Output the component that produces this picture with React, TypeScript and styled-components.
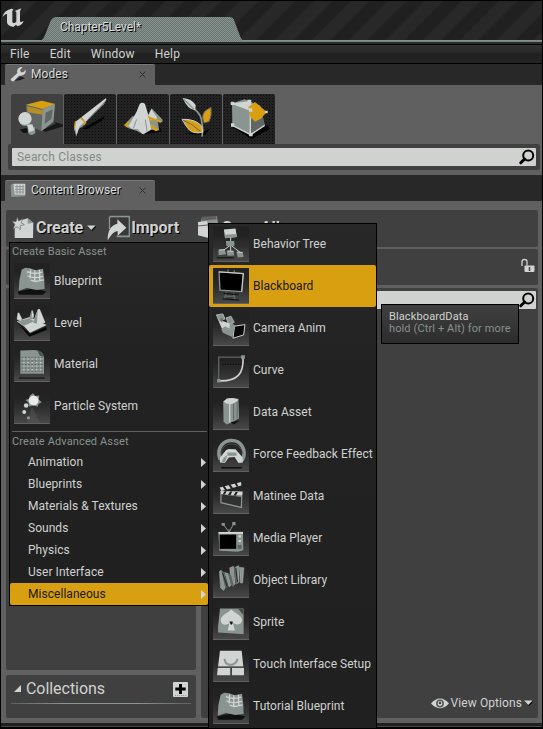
import React from 'react';
import styled, { createGlobalStyle } from 'styled-components';

const Global = createGlobalStyle`
  *{box-sizing:border-box}
  body{margin:0;background:#000;font-family:Roboto,"Liberation Sans",sans-serif;font-size:12px;color:#d0d2d0;overflow:hidden}
  svg{display:block;flex:none}
`;

const W = '#d0d4d2';
const G = '#8a9490';
const D = '#606664';
const A = '#d8a010';

const Window = styled.div`
  position:relative;width:543px;height:729px;background:#606060;
  border:1px solid #000;display:flex;flex-direction:column;overflow:hidden;
`;
const TitleBar = styled.div`
  height:43px;flex:none;display:flex;align-items:flex-start;position:relative;
  background:linear-gradient(#8a9490,#747e7a) 0 39px/100% 2px no-repeat,
    linear-gradient(#282e2c,#282e2c) 0 41px/100% 2px no-repeat,
    repeating-linear-gradient(135deg,#202020 0 11px,#282828 13px 24px,#202020 26.16px);
`;
const Logo = styled.svg`margin:6px 0 0 1px;`;
const LevelTab = styled.div`
  width:208px;height:26px;margin:15px 0 0 11px;padding-left:23px;line-height:22px;color:#d8dcda;
  background:repeating-conic-gradient(#87918d 0 25%,#6a7672 0 50%) 0 0/2px 2px;
  clip-path:path("M0 26 Q6 25 8 19 L14 4 Q16 1 19 1 L192 1 Q196 1 197 4 L203 20 Q205 25 208 26Z");
  text-shadow:1px 1px 0 #000;letter-spacing:-.05px;
`;
const MenuBar = styled.div`
  height:20px;flex:none;border:1px solid #000;border-width:1px 0;display:flex;gap:20px;padding-left:9px;
  align-items:center;background:linear-gradient(#303030,#282828 40%,#202020 50%,#242424);letter-spacing:.2px;
`;
const TabStrip = styled.div<{ $h: number }>`
  height:${p => p.$h}px;flex:none;background:#282828;display:flex;align-items:flex-end;padding-left:4px;
`;
const PanelTab = styled.div`
  width:150px;height:21px;background:#606060;border-top:1px solid #747a78;border-radius:2px 2px 0 0;
  display:flex;align-items:center;padding:0 9px 2px 5px;text-shadow:1px 1px 0 #000;color:#d8dcda;
`;
const TabLabel = styled.span`flex:1;padding-left:5px;white-space:nowrap;letter-spacing:.05px;`;
const ModesPanel = styled.div`height:90px;flex:none;padding:9px 2px 0 7px;background:#606060;`;
const ModeRow = styled.div`display:flex;gap:1px;padding-left:3px;`;
const ModeButton = styled.div<{ $on?: boolean }>`
  width:52px;height:50px;border-radius:2px 2px 0 0;
  background:${p => p.$on ? '#404040' : 'radial-gradient(#0c0c0c 25%,transparent 30%) 0 0/3px 3px,#222'};
`;
const SearchFrame = styled.div`background:#404040;border-radius:2px;padding:4px;height:26px;`;
const SearchField = styled.div`
  background:#d0d2d0;height:18px;border-radius:1px;display:flex;align-items:center;justify-content:space-between;
  padding:0 1px 0 5px;color:#7f8a86;letter-spacing:.2px;
`;
const Browser = styled.div`height:522px;flex:none;background:#606060;padding:9px 4px 5px 5px;display:flex;flex-direction:column;`;
const Toolbar = styled.div`
  height:37px;flex:none;background:#404040;border-radius:2px;display:flex;align-items:center;padding:0 0 2px 6px;
  font-weight:700;font-size:16px;text-shadow:1px 1px 0 #000;white-space:nowrap;
`;
const ToolLabel = styled.span<{ $l?: number; $r?: number }>`margin:0 ${p => p.$r || 0}px 0 ${p => p.$l || 0}px;letter-spacing:-.05px;`;
const PathBar = styled.div`
  height:36px;flex:none;margin:2px 0 3px;background:#404040;border-radius:2px;display:flex;align-items:center;
  justify-content:flex-end;padding:0 3px 2px 0;
`;
const Columns = styled.div`flex:1;display:flex;gap:5px;min-height:0;`;
const LeftColumn = styled.div`width:190px;display:flex;flex-direction:column;gap:5px;`;
const Sources = styled.div`flex:1;background:#404040;border-radius:2px;`;
const Collections = styled.div`
  height:43px;background:#404040;border-radius:2px;padding:0 5px;font-size:16px;
`;
const CollectionHead = styled.div`
  display:flex;align-items:center;height:29px;padding:0 3px;border-bottom:1px solid;
  border-image:linear-gradient(90deg,#606060,#8a9490 30%,#8a9490 70%,#606060) 1;
`;
const CollectionTitle = styled.span`flex:1;padding:0 0 1px 5px;letter-spacing:-.05px;`;
const AssetView = styled.div`
  flex:1;background:#404040;border-radius:2px;display:flex;flex-direction:column;justify-content:space-between;
  padding:3px 2px 6px 4px;
`;
const ViewOptions = styled.div`display:flex;align-items:center;justify-content:flex-end;gap:2px;padding-right:3px;height:18px;letter-spacing:.08px;`;
const StatusEdge = styled.div`height:5px;flex:none;background:linear-gradient(#202020 0 3px,#484848 3px 4px,#000 4px);`;

const CreateMenu = styled.div`
  position:absolute;left:8px;top:241px;width:200px;height:364px;border:1px solid #000;
  background:linear-gradient(#282828,#222 30%,#202020);display:flex;flex-direction:column;
`;
const MiscMenu = styled.div`
  position:absolute;left:207px;top:222px;width:169px;height:506px;border:1px solid #000;
  background:linear-gradient(#282828,#222 30%,#202020);
`;
const MiscList = styled.div`margin-top:-1px;`;
const MenuHeader = styled.div<{ $h: number }>`
  height:${p => p.$h}px;line-height:18px;padding-left:2px;font-size:11px;color:#87918d;letter-spacing:.13px;
`;
const AssetRow = styled.div<{ $on?: boolean }>`
  height:42px;display:flex;align-items:center;gap:4px;padding-left:4px;white-space:nowrap;letter-spacing:.03px;
  border-radius:2px;background:${p => p.$on ? A : 'transparent'};color:${p => p.$on ? '#181818' : '#d0d2d0'};
`;
const Thumb = styled.svg`background:linear-gradient(#222 25%,#303030 60%,#484848);border-bottom:1px solid #606060;`;
const Rule = styled.div`height:1px;background:#606060;margin:4px 1px 1px 2px;`;
const SubRow = styled.div<{ $on?: boolean }>`
  height:22px;flex:none;display:flex;align-items:center;justify-content:space-between;padding:0 2px 0 18px;
  border-radius:2px;letter-spacing:.04px;background:${p => p.$on ? A : 'transparent'};color:${p => p.$on ? '#181818' : '#d0d2d0'};
`;
const Tooltip = styled.div`
  position:absolute;left:380px;top:303px;width:138px;height:40px;border:1px solid #000;padding:6px 7px;
  font-size:11px;line-height:12px;letter-spacing:.12px;white-space:nowrap;
  background:linear-gradient(#404040,#2c2c2c);
`;
const Hint = styled.div`color:#87918d;`;

const Magnifier = () => (
  <svg width="16" height="16" viewBox="0 0 16 16" fill="none" stroke="#000"><circle cx="9.2" cy="6.5" r="5" strokeWidth="2" /><path d="M5.7 10 1.8 13.8" strokeWidth="3" strokeLinecap="round" /></svg>
);
const Close = () => (
  <svg width="7" height="7" viewBox="0 0 7 7" stroke="#303030"><path d="M.5.5 6.5 6.5M6.5.5.5 6.5" /></svg>
);
const Down = () => (
  <svg width="9" height="6" viewBox="0 0 9 6"><path d="M.5 1.5h9L5 6z" fill="#000" /><path d="M0 .5h8.5L4.3 5z" fill={W} /></svg>
);
const Right = () => (
  <svg width="5" height="9" viewBox="0 0 5 9"><path d="M0 0 5 4.5 0 9z" fill={W} /></svg>
);

const sheet = (
  <>
    <path d="M10 88 62 78 98 88 88 98 14 98Z" fill="#101010" />
    <path d="M22 21 33 15 48 16 65 22 88 18 92 50 93 80 67 83 38 77 13 86 15 53Z" fill={G} />
    <path d="M38 27 62 33 86 28M40 40 62 46 88 41M50 20 48 48M63 22 62 58M77 21 78 56M50 53 64 57 90 52" stroke={W} strokeWidth="4" fill="none" />
  </>
);

const art: Record<string, React.ReactNode> = {
  Blueprint: sheet,
  'Tutorial Blueprint': sheet,
  Level: (
    <>
      <path d="M12 56 35 86 46 98 100 76 98 67 48 89Z" fill="#080808" />
      <path d="M7 50 47 37 99 62 48 86 31 67Z" fill={W} /><path d="M10 50 45 41 60 50 29 64Z" fill={G} />
      <path d="M57 54 72 13 78 12 95 54 78 62Z" fill={W} /><path d="M72 15 69 58 57 54Z" fill={G} />
      <path d="M10 24 14 24 24 44 15 48 7 44Z" fill={W} /><path d="M52 17 58 17 58 43 45 43Z" fill={G} /><path d="M55 17 60 30 58 40 53 38Z" fill={W} />
    </>
  ),
  Material: (
    <>
      <path d="M18 14 62 12Q90 14 91 35L91 86 18 86Z" fill={G} />
      <path d="M70 13Q88 17 91 33L78 30Z" fill="#4e5452" />
      <path d="M22 35H88M22 46H88M22 57H88M22 68H88M22 78H88" stroke="#59605d" strokeWidth="3" strokeDasharray="5 5" />
      <path d="M27 40H88M27 51H88M27 62H88M27 73H88" stroke={W} strokeWidth="3" strokeDasharray="4 9" /><path d="M14 99H93" stroke="#181818" strokeWidth="4" />
    </>
  ),
  'Particle System': (
    <>
      <path d="M53 56 80 108H40Z" fill="#606060" opacity=".4" />
      <path d="M57 16 64 25 76 23 75 36 84 44 74 49 71 58 58 53 45 57 43 45 34 37 45 33 47 24Z" fill={G} />
      <circle cx="59" cy="39" r="15" fill="#e8eae8" /><circle cx="36" cy="54" r="7" fill={W} /><circle cx="30" cy="74" r="6" fill={W} /><circle cx="43" cy="92" r="5" fill={G} />
    </>
  ),
  'Behavior Tree': (
    <>
      <path d="M53 34V82M53 59 25 79M53 59 84 83" stroke={W} strokeWidth="3" fill="none" />
      <path d="M32 11 68 8 72 34 36 38Z" fill={W} /><path d="M33 27 72 25 72 34 36 38Z" fill={G} />
      <path d="M38 46 64 46 65 61 40 62ZM15 74 35 73 39 87 16 90ZM41 77 62 78 64 91 43 92ZM71 80 90 82 93 96 75 97Z" fill={G} />
      <path d="M17 74 35 73M43 77 62 78M73 80 90 82" stroke={W} strokeWidth="3" /><path d="M10 98 62 98" stroke="#181818" strokeWidth="4" />
    </>
  ),
  Blackboard: (
    <>
      <path d="M45 5V16M64 7V17M40 74 34 95M62 76 66 98M34 87H65" stroke={D} strokeWidth="5" fill="none" />
      <path d="M17 12 92 17 87 73 20 68Z" fill="#000" stroke={G} strokeWidth="4" /><path d="M17 12 92 17 87 73" fill="none" stroke={W} strokeWidth="3" />
      <path d="M31 78 77 82M28 95 78 99" stroke="#141414" strokeWidth="4" />
    </>
  ),
  'Camera Anim': (
    <>
      <path d="M9 15 29 12 36 28 16 33ZM39 24 54 19 64 38 47 48Z" fill={G} stroke={W} strokeWidth="2" />
      <path d="M16 35 28 34 68 48 60 71 26 58Z" fill={W} /><path d="M24 59 36 50 61 64 58 83 29 70Z" fill={G} />
      <path d="M65 50 97 45 93 77 60 87Z" fill="#080808" stroke={W} strokeWidth="3" /><path d="M51 40 67 48 58 83 47 74Z" fill={G} /><path d="M20 25 30 28 26 39Z" fill={D} />
    </>
  ),
  Curve: (
    <>
      <path d="M16 89V16H91" fill="none" stroke={D} strokeWidth="4" /><path d="M91 16C94 66 74 91 17 89" fill="none" stroke={W} strokeWidth="5" />
      <path d="M28 38H88" stroke="#000" strokeWidth="3" strokeDasharray="3 5" /><path d="M85 10H97V21H85ZM11 83H22V94H11Z" fill={G} />
    </>
  ),
  'Data Asset': (
    <>
      <path d="M30 22 50 12 77 15 79 75 55 89 40 94 31 85Z" fill={G} />
      <path d="M31 23 41 14 60 12 77 17 71 24 56 32 39 29Z" fill={W} /><path d="M50 31V87" stroke={W} strokeWidth="4" /><path d="M62 29V79M73 24V74" stroke={D} strokeWidth="3" />
      <path d="M53 87 80 82 63 94Z" fill="#101010" />
    </>
  ),
  'Force Feedback Effect': (
    <>
      <path d="M20 72C7 32 34 14 56 14C86 14 104 45 89 75" fill="none" stroke={G} strokeWidth="11" />
      <path d="M24 57C23 15 85 14 90 54" fill="none" stroke={D} strokeWidth="2" />
      <path d="M22 64 39 43 47 40 68 41 90 66 91 82 77 83 65 65 47 66 35 83 20 82 19 72Z" fill={W} />
      <path d="M43 51H71V61H43Z" fill={G} /><path d="M32 66 43 59 35 82 24 82Z" fill={G} /><path d="M24 98H87" stroke="#101010" strokeWidth="5" />
    </>
  ),
  'Matinee Data': (
    <>
      <path d="M23 48 87 57 86 91 23 76Z" fill="#303030" stroke={G} strokeWidth="4" />
      <path d="M21 40 90 42 89 55 23 49Z" fill={W} /><path d="M19 29 85 12 86 23 24 40Z" fill={W} />
      <path d="M28 26 36 38 42 36 34 24M46 21 54 33 60 31 52 19M65 16 72 28 77 26 71 14M34 41 28 51 35 51 41 41M51 42 45 52 52 53 58 42M68 43 62 54 69 55 75 43" fill="#202020" />
    </>
  ),
  'Media Player': (
    <>
      <path d="M31 14 48 38 63 10M48 37V28" fill="none" stroke={G} strokeWidth="3" /><path d="M25 9H35V18H25ZM58 6H68V16H58Z" fill={G} />
      <path d="M15 37 91 36 92 93 75 98 18 95Z" fill={G} /><path d="M16 37H91V43H16Z" fill={W} /><path d="M19 45H70V89H19Z" fill="#000" /><path d="M77 47H85V54H77ZM77 62H85V68H77Z" fill={W} /><path d="M74 77H87V89H74Z" fill={D} />
    </>
  ),
  'Object Library': (
    <>
      <path d="M18 29 24 25 36 80 31 88 22 80ZM34 32 46 36 54 72 48 77ZM50 18 62 13 67 68 59 74 53 56ZM67 16 78 11 79 62 72 68ZM80 16 94 18 90 65 83 65Z" fill={G} stroke={W} strokeWidth="1" />
      <path d="M26 28 33 31 44 76 37 82ZM44 34 54 40 64 78 55 72ZM63 16 67 18 75 67 68 68Z" fill={D} /><path d="M28 34 42 76M69 18 74 62" stroke="#202020" strokeWidth="3" />
    </>
  ),
  Sprite: (
    <>
      <path d="M20 14H93V93L14 88V70Z" fill={G} /><path d="M76 15H92V34Z" fill="#404846" />
      <path d="M54 16C46 28 22 34 22 50C23 67 41 67 49 59L44 82H66L60 59C69 66 87 66 88 50C88 33 64 28 54 16Z" fill={W} /><path d="M49 54H59V60L54 65Z" fill="#181818" />
    </>
  ),
  'Touch Interface Setup': (
    <>
      <path d="M20 15H87L92 63H14ZM13 68H51V90H11ZM57 68H94V90H57Z" fill={W} /><path d="M34 40Q36 57 50 58H57Q73 52 74 39" fill="none" stroke={G} strokeWidth="6" /><path d="M41 43Q53 58 67 43V34H41Z" fill={W} /><path d="M14 65H93M53 67V91" stroke={D} strokeWidth="3" />
    </>
  ),
};

const Asset = ({ name, on }: { name: string; on?: boolean }) => (
  <AssetRow $on={on}><Thumb width="36" height="36" viewBox="0 0 108 108">{art[name]}</Thumb>{name}</AssetRow>
);

const modes = [
  <>
    <path d="M65 101 95 108 136 88 124 82 165 94 104 113Z" fill="#181818" />
    <path d="M45 32 92 20 132 30 127 83 91 112 48 92Z" fill={D} /><path d="M45 32 92 20 132 30 95 45Z" fill={A} /><path d="M95 45 132 30 127 83 91 112Z" fill={G} /><path d="M104 56 125 46 121 74 101 90Z" fill={D} />
    <path d="M48 37 95 48 94 62 50 55Z" fill={A} opacity=".7" />
    <path d="M26 107 60 99 58 115 38 117Z" fill="#101010" /><circle cx="42" cy="74" r="20" fill={W} /><path d="M26 86Q40 99 56 86L54 92Q42 100 32 93ZM49 100 72 99 73 117Q60 129 51 116Z" fill={G} /><path d="M48 92 64 91 70 109 55 115Z" fill={W} />
  </>,
  <>
    <path d="M55 104 122 66 118 78 69 106Z" fill="#060606" /><path d="M52 70 126 12 127 18 64 85Z" fill={W} /><path d="M64 85 127 18 120 31 68 82Z" fill={G} />
    <path d="M51 70 66 86 57 97 44 105 37 128 30 105 32 85Z" fill={G} /><path d="M34 84 51 73 61 84 46 99 38 122 33 102Z" fill={W} /><path d="M49 72 65 86 59 92M35 82 32 101" stroke={A} strokeWidth="4" fill="none" />
  </>,
  <>
    <path d="M31 103 80 107 126 97 135 113 87 120Z" fill="#080808" /><path d="M21 94 47 66 86 75 104 43 137 77 136 85 122 82 127 109 103 107 80 121 61 112 34 103Z" fill={G} />
    <path d="M34 96 58 55 68 30Q76 22 84 30L93 60 103 106 77 121 62 106 44 104Z" fill={W} /><path d="M103 45 121 73 111 79 94 67Z" fill={W} /><path d="M22 93 38 79 31 101ZM93 66 135 82 130 87 108 77 98 83ZM103 91 126 108 116 112 101 101Z" fill={A} /><path d="M59 76 49 103M85 77 90 112" stroke={G} strokeWidth="3" />
  </>,
  <>
    <path d="M43 119 96 115 120 104 105 123Z" fill="#050505" /><path d="M73 45Q94 60 96 88Q101 108 96 128" fill="none" stroke={G} strokeWidth="5" />
    <path d="M38 12Q65 14 77 33L76 49Q53 47 38 12Z" fill={W} /><path d="M42 16 72 46" stroke={G} strokeWidth="4" /><path d="M123 40Q126 65 118 82L103 87Q92 68 105 51Z" fill={A} stroke={D} strokeWidth="3" /><path d="M36 76Q75 74 95 96L98 115Q65 123 49 97Z" fill={A} stroke={W} strokeWidth="3" /><path d="M38 78Q68 89 91 112" stroke={D} strokeWidth="3" fill="none" />
  </>,
  <>
    <path d="M28 99 85 135 139 106 135 94Z" fill="#050505" /><path d="M27 28 65 16 112 35 125 94 82 123 28 94Z" fill={G} />
    <path d="M27 28 77 22 95 37 82 48Z" fill={W} /><path d="M82 48 112 35 125 94 82 123Z" fill={D} /><path d="M27 28 82 48V121M28 94 83 122 125 94" fill="none" stroke={W} strokeWidth="4" />
    <path d="M76 39 96 24 131 54 115 73 96 83 82 69Z" fill={A} /><path d="M23 23H34V33H23ZM73 17H85V27H73ZM78 43H88V53H78ZM126 50H134V58H126ZM24 88H34V98H24ZM78 116H89V127H78Z" fill={W} />
  </>,
];

const misc = ['Behavior Tree', 'Blackboard', 'Camera Anim', 'Curve', 'Data Asset', 'Force Feedback Effect', 'Matinee Data', 'Media Player', 'Object Library', 'Sprite', 'Touch Interface Setup', 'Tutorial Blueprint'];

export default function App() {
  return (
    <Window>
      <Global />
      <TitleBar>
        <Logo width="24" height="22" viewBox="0 0 72 66"><path d="M1 31Q5 10 28 5L34 7 31 13V44Q32 50 39 47L43 44V15L38 12 58 4 54 13V43Q56 48 65 41Q62 54 46 58L42 53 34 60Q16 57 15 46V20Q8 20 1 31Z" fill={W} /></Logo>
        <LevelTab>Chapter5Level*</LevelTab>
      </TitleBar>
      <MenuBar><span>File</span><span>Edit</span><span>Window</span><span>Help</span></MenuBar>
      <TabStrip $h={21}>
        <PanelTab>
          <svg width="16" height="16" viewBox="0 0 48 48"><path d="M14 44 32 31 45 37 30 43Z" fill="#202020" /><path d="M2 40 22 21Q19 7 32 3L38 4 30 12 33 19 40 19 47 11Q49 27 33 29L27 29 11 46Q3 47 2 40Z" fill={W} /></svg>
          <TabLabel>Modes</TabLabel><Close />
        </PanelTab>
      </TabStrip>
      <ModesPanel>
        <ModeRow>
          {modes.map((m, i) => <ModeButton key={i} $on={i === 0}><svg width="52" height="50" viewBox="0 0 156 150">{m}</svg></ModeButton>)}
        </ModeRow>
        <SearchFrame><SearchField>Search Classes<Magnifier /></SearchField></SearchFrame>
      </ModesPanel>
      <TabStrip $h={26}>
        <PanelTab>
          <svg width="16" height="16" viewBox="0 0 48 48"><path d="M2 8 10 5 15 39 46 38 45 43 4 45Z" fill={G} /><path d="M10 5H46V38H14Z" fill={W} /><path d="M15 14H43M15 22H43M15 30H43M21 8V36M30 8V36M39 8V36" stroke={G} strokeWidth="3" /></svg>
          <TabLabel>Content Browser</TabLabel><Close />
        </PanelTab>
      </TabStrip>
      <Browser>
        <Toolbar>
          <svg width="22" height="22" viewBox="0 0 66 66"><path d="M8 16 47 4 64 17 63 63H8Z" fill={W} /><path d="M47 4V20L64 17Z" fill={G} /><path d="M16 1 20 12 33 5 27 17 37 23 25 26 25 38 16 29 3 36 9 22 0 13 12 14Z" fill={W} stroke={D} strokeWidth="2" /></svg>
          <ToolLabel $l={2} $r={4}>Create</ToolLabel><Down />
          <svg width="34" height="26" viewBox="-33 0 102 78"><path d="M8 5H67V64H29M8 42V5" fill="none" stroke={G} strokeWidth="5" /><path d="M10 8H64V60H10Z" fill="#383838" /><path d="M2 76Q1 33 31 26V13L58 38 32 62V48Q17 49 2 76Z" fill={W} /></svg>
          <ToolLabel $l={1} $r={18}>Import</ToolLabel>
          <svg width="23" height="23" viewBox="0 0 69 69"><path d="M14 6 60 1 66 48 36 66 3 57Z" fill={G} /><path d="M3 18 30 15 36 66 3 58Z" fill={W} /><path d="M14 2 57 0 59 10 15 14Z" fill="#606060" /><path d="M3 30 60 24" stroke="#606060" strokeWidth="3" /></svg>
          <ToolLabel $l={2}>Save All</ToolLabel>
        </Toolbar>
        <PathBar><svg width="15" height="16" viewBox="0 0 15 16"><path d="M2 8V3.5Q2 1.5 4.5 1.5T7 3.5V7.5" fill="none" stroke={W} strokeWidth="1.3" /><rect x="4.5" y="7.5" width="10" height="6.5" rx="1" fill={W} /><path d="M9.5 9V13" stroke="#404040" strokeWidth="1.5" /></svg></PathBar>
        <Columns>
          <LeftColumn>
            <Sources />
            <Collections>
              <CollectionHead>
                <svg width="7" height="8" viewBox="0 0 7 8"><path d="M7 0V7H0Z" fill={W} /></svg>
                <CollectionTitle>Collections</CollectionTitle>
                <svg width="15" height="15" viewBox="0 0 15 15"><rect width="15" height="15" rx="1" fill={W} /><path d="M2 13.5H13" stroke={G} strokeDasharray="1 1" /><path d="M7.5 2V12M2.3 7H12.7" stroke="#000" strokeWidth="3" /></svg>
              </CollectionHead>
            </Collections>
          </LeftColumn>
          <AssetView>
            <SearchField><span /><Magnifier /></SearchField>
            <ViewOptions>
              <svg width="18" height="11" viewBox="0 0 18 11"><path d="M0 5.5Q9-4.5 18 5.5Q9 15 0 5.5" fill={W} /><circle cx="9" cy="5.5" r="3.2" fill={W} stroke="#505654" strokeWidth="1.5" /><circle cx="9" cy="5" r="1.3" fill="#404040" /></svg>
              <span>View Options</span><Down />
            </ViewOptions>
          </AssetView>
        </Columns>
      </Browser>
      <StatusEdge />
      <CreateMenu>
        <MenuHeader $h={17}>Create Basic Asset</MenuHeader>
        {['Blueprint', 'Level', 'Material', 'Particle System'].map(n => <Asset key={n} name={n} />)}
        <Rule />
        <MenuHeader $h={18}>Create Advanced Asset</MenuHeader>
        {['Animation', 'Blueprints', 'Materials & Textures', 'Sounds', 'Physics', 'User Interface', 'Miscellaneous'].map(n => <SubRow key={n} $on={n === 'Miscellaneous'}>{n}<Right /></SubRow>)}
      </CreateMenu>
      <MiscMenu><MiscList>{misc.map(n => <Asset key={n} name={n} on={n === 'Blackboard'} />)}</MiscList></MiscMenu>
      <Tooltip><div>BlackboardData</div><Hint>hold (Ctrl + Alt) for more</Hint></Tooltip>
    </Window>
  );
}
